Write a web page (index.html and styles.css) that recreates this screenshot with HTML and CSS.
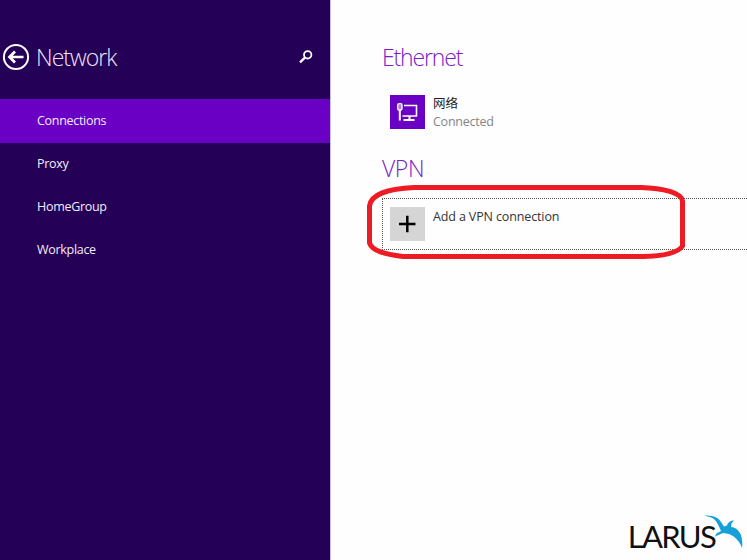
FILE: index.html
```
<!DOCTYPE html>
<html lang="en">
<head>
<meta charset="utf-8">
<title>Network</title>
<link rel="stylesheet" href="styles.css">
</head>
<body>
<div class="app">
  <aside class="sidebar">
    <header class="sidebar-head">
      <svg class="back" viewBox="0 0 28 28"><circle cx="14" cy="14" r="12.1" fill="none" stroke="#fff" stroke-width="2"/><path d="M21.500 14H8M13 8.500L7.500 14l5.500 5.500" fill="none" stroke="#fff" stroke-width="2.700"/></svg>
      <h1 class="title">Network</h1>
      <svg class="search" viewBox="0 0 14 14"><circle cx="8.700" cy="4.800" r="3.700" fill="none" stroke="#fff" stroke-width="1.800"/><path d="M5.900 7.700L1 12.300" stroke="#fff" stroke-width="2.300"/></svg>
    </header>
    <nav class="menu">
      <a class="item active"><span>Connections</span></a>
      <a class="item"><span>Proxy</span></a>
      <a class="item"><span>HomeGroup</span></a>
      <a class="item"><span>Workplace</span></a>
    </nav>
  </aside>
  <main class="content">
    <h2 class="heading">Ethernet</h2>
    <div class="connection">
      <svg class="tile" viewBox="0 0 35 34"><path fill="#6900c4" d="M0 0h35v34H0z"/><g fill="none" stroke="#fff"><path d="M14 10.500h12.500v10.500H12.500" stroke-width="1.600"/><path d="M19.500 21v3.500M13.500 25h11" stroke-width="2"/><rect x="7.700" y="8.700" width="4.300" height="6.300" rx="1.300" fill="#b080df" stroke-width="1.300"/><path d="M9.800 15v10.500" stroke-width="2"/></g></svg>
      <div class="details"><div class="name">网络</div><div class="status">Connected</div></div>
    </div>
    <h2 class="heading vpn">VPN</h2>
    <div class="add-row">
      <svg class="tile" viewBox="0 0 35 34"><path fill="#d5d5d5" d="M0 0h35v34H0z"/><path d="M9 17h16.500M17.300 8.800v16.400" stroke="#000" stroke-width="2.500"/></svg>
      <div class="add-label">Add a VPN connection</div>
    </div>
    <footer class="brand">
      <span class="wordmark">LARUS</span>
      <svg class="bird" viewBox="0 0 40 36"><path fill="#16a0da" d="M1 1.500C6 1 12 2 15 4.500 18 7 19 10 21 12.500L24 11.500C25 8 28 6.500 31 6.500L28.500 9.500 28 13C33 13 36 17 38 21 39.500 26 39.500 31 39 34 37 28 33 23 26 20L20 19 12 22.500 13.500 19.500 18 17C16 12 13 5 8 3.500Z"/></svg>
    </footer>
  </main>
  <svg class="marker" viewBox="0 0 322 76"><path d="M47 3.500H274C296 4 315 9 315.500 17V62C311 69 296 72 276 72.500H36C18 70 5 67 2.500 59V22C4 10 20 5 47 3.500Z" fill="none" stroke="#ed1c24" stroke-width="5"/></svg>
</div>
</body>
</html>
```
FILE: styles.css
```
* { box-sizing: border-box; }
body { margin: 0; overflow: hidden; font-family: "Open Sans", "Noto Sans CJK SC", sans-serif; }
.app { position: relative; display: flex; width: 747px; height: 560px; overflow: hidden; background: #fefefe; }
.sidebar { width: 330px; background: #240057; color: #fff; }
.sidebar-head { display: flex; align-items: center; height: 99px; padding: 15px 17px 0 2px; }
.back { width: 28px; height: 28px; }
.title { margin: 0 auto 0 6px; font-size: 23px; font-weight: 300; line-height: 32px; letter-spacing: -.95px; color: #eee5f8; }
.search { width: 14px; height: 14px; }
.item { display: flex; align-items: center; height: 43px; padding-left: 37px; font-size: 12.500px; color: #f3edfa; }
.active { height: 44px; margin-bottom: -1px; padding-bottom: 2px; background: #6900c4; }
.item span { letter-spacing: -.3px; }
.content { display: flex; flex-direction: column; flex: 1; padding: 41px 0 0 51px; border-left: 1px solid #c9bfdb; }
.heading { margin: 0; color: #7822c5; font-size: 23px; line-height: 32px; font-weight: 300; letter-spacing: -1.150px; }
.connection { display: flex; margin: 22px 0 0 8px; height: 34px; }
.tile { width: 35px; height: 34px; flex: none; }
.details { margin-left: 8px; font-size: 12.500px; line-height: 18px; }
.name { color: #222; }
.status { color: #858585; line-height: 18px; letter-spacing: -.25px; }
.vpn { margin-top: 23px; letter-spacing: -.4px; }
.add-row { display: flex; height: 52px; margin-top: 14px; padding: 8px 0 0 7px; border: 1px dotted #555; border-right: 0; }
.add-label { margin-left: 8px; font-size: 12.500px; line-height: 20px; color: #333; letter-spacing: -.13px; }
.brand { display: flex; height: 46px; margin: auto 4px 0 auto; }
.wordmark { margin-top: 4px; font: 31px/36px Lato, sans-serif; letter-spacing: -1.700px; color: #111; }
.bird { width: 40px; height: 36px; margin-left: -12px; }
.marker { position: absolute; left: 367px; top: 184px; width: 322px; height: 76px; }
```
